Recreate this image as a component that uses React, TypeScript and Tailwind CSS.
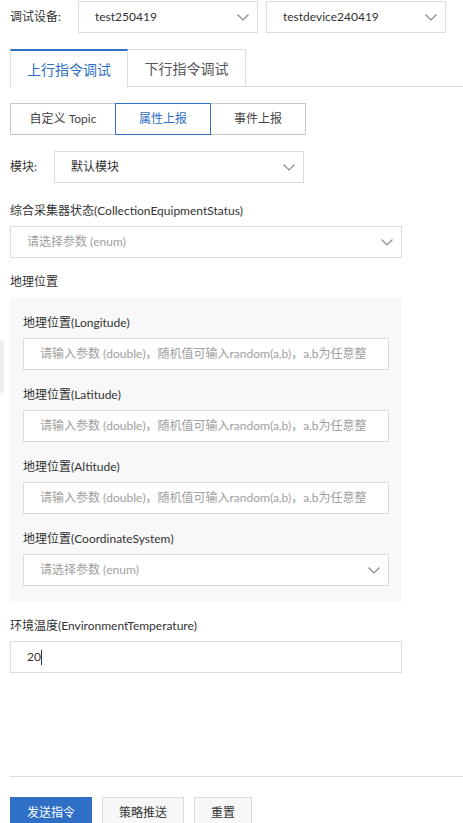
import React from "react";

const Chevron = () => (
  <svg width="12" height="7" viewBox="0 0 12 7" className="shrink-0">
    <polyline points="0.5,0.5 6,6 11.5,0.5" fill="none" stroke="#8a8a8a" strokeWidth="1.2" />
  </svg>
);

const Select = ({ text, placeholder, className }: { text: string; placeholder?: boolean; className: string }) => (
  <div className={`flex items-center justify-between h-8 border border-[#dcdcdc] bg-white pl-4 pr-2 ${className}`}>
    <span className={placeholder ? "text-[#a0a0a0]" : "text-[#333]"}>{text}</span>
    <Chevron />
  </div>
);

const PH = "请输入参数 (double)，随机值可输入random(a,b)，a,b为任意整";

const Input = ({ className }: { className: string }) => (
  <div className={`flex items-center h-8 border border-[#dcdcdc] bg-white pl-4 pr-2 overflow-hidden ${className}`}>
    <span className="whitespace-nowrap text-[#a0a0a0]">{PH}</span>
  </div>
);

const Label = ({ children, className = "" }: { children: React.ReactNode; className?: string }) => (
  <div className={`h-[18px] leading-[18px] text-[#333] ${className}`}>{children}</div>
);

export default function App() {
  return (
    <div className="relative w-[463px] h-[823px] overflow-hidden bg-white text-[12px] text-[#333] font-['Lato','Noto_Sans_CJK_SC',sans-serif]">
      <div className="absolute left-0 top-[340px] w-[4px] h-[53px] rounded-r-[3px] bg-[#ececec]" />
      <div className="pl-[10px] pt-px">
        {/* top row */}
        <div className="flex items-center h-8">
          <div className="w-[68px]">调试设备:</div>
          <Select text="test250419" className="w-[180px]" />
          <Select text="testdevice240419" className="w-[180px] ml-[8px]" />
        </div>

        {/* tabs */}
        <div className="flex h-[38px] mt-4 border-b border-[#dcdcdc]">
          <div className="relative z-10 flex items-center justify-center w-[118px] h-[38px] -mb-px bg-white border-t-2 border-t-[#2f6fc6] border-l border-r border-[#dcdcdc] text-[14px] text-[#2f6fc6]">
            上行指令调试
          </div>
          <div className="flex items-center justify-center w-[118px] h-[37px] border-t border-r border-[#dcdcdc] text-[14px] text-[#555]">
            下行指令调试
          </div>
        </div>

        {/* segmented */}
        <div className="flex mt-4 h-8">
          <div className="flex items-center justify-center w-[106px] h-8 border border-[#c8c8c8] text-[#444]">自定义 Topic</div>
          <div className="relative z-10 flex items-center justify-center w-[96px] h-8 -ml-px border border-[#2f6fc6] text-[#2f6fc6]">属性上报</div>
          <div className="flex items-center justify-center w-[96px] h-8 -ml-px border border-[#c8c8c8] text-[#444]">事件上报</div>
        </div>

        {/* module */}
        <div className="flex items-center mt-4 h-8">
          <div className="w-[44px]">模块:</div>
          <Select text="默认模块" className="w-[250px]" />
        </div>

        <Label className="mt-[19px]">综合采集器状态(CollectionEquipmentStatus)</Label>
        <Select text="请选择参数 (enum)" placeholder className="w-[392px] mt-[6px]" />

        <Label className="mt-[15px]">地理位置</Label>
        <div className="w-[392px] mt-[7px] bg-[#f8f8f8] pl-[13px] pr-[13px] pt-4 pb-4">
          <Label>地理位置(Longitude)</Label>
          <Input className="w-[366px] mt-[6px]" />
          <Label className="mt-4">地理位置(Latitude)</Label>
          <Input className="w-[366px] mt-[6px]" />
          <Label className="mt-4">地理位置(Altitude)</Label>
          <Input className="w-[366px] mt-[6px]" />
          <Label className="mt-4">地理位置(CoordinateSystem)</Label>
          <Select text="请选择参数 (enum)" placeholder className="w-[366px] mt-[6px]" />
        </div>

        <Label className="mt-[15px]">环境温度(EnvironmentTemperature)</Label>
        <div className="flex items-center w-[392px] h-8 mt-[6px] border border-[#dcdcdc] pl-4">
          <span className="text-[#333]">20</span>
          <span className="inline-block w-px h-[15px] bg-[#333]" />
        </div>

        <div className="mt-[103px] border-t border-[#dcdcdc]" />

        <div className="flex gap-[10px] mt-5">
          <div className="flex items-center justify-center w-[82px] h-8 bg-[#2f6fc6] text-white">发送指令</div>
          <div className="flex items-center justify-center w-[82px] h-8 bg-[#f7f7f7] border border-[#dcdcdc] text-[#333]">策略推送</div>
          <div className="flex items-center justify-center w-[58px] h-8 bg-[#f7f7f7] border border-[#dcdcdc] text-[#333]">重置</div>
        </div>
      </div>
    </div>
  );
}
